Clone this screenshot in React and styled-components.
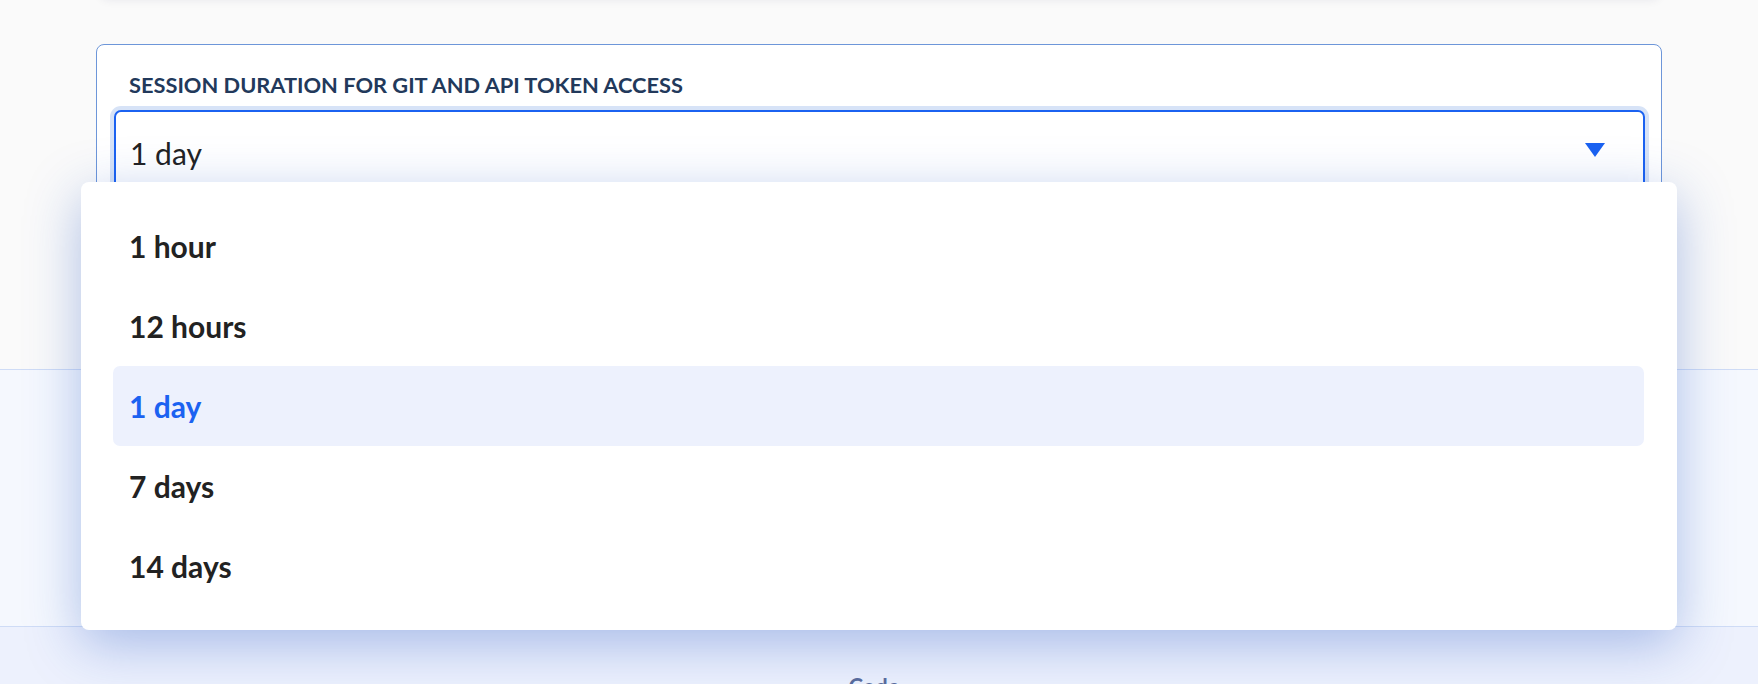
import React from "react";
import styled, { createGlobalStyle } from "styled-components";

const Global = createGlobalStyle`
  html, body { margin: 0; padding: 0; }
  body {
    background: #fafafa;
    font-family: Lato, "Noto Sans", "Liberation Sans", sans-serif;
    overflow: hidden;
  }
  * { box-sizing: border-box; }
`;

const Page = styled.div`
  display: flex;
  flex-direction: column;
  width: 1758px;
  height: 684px;
  overflow: hidden;
`;

const PrevCard = styled.div`
  flex: none;
  height: 40px;
  margin: -42px 98px 0 100px;
  background: #ffffff;
  border-radius: 8px;
  box-shadow: 0 2px 10px rgba(30, 30, 80, 0.08);
`;

const SettingsCard = styled.section`
  flex: none;
  margin: 46px 96px 0 96px;
  width: 1566px;
  background: #ffffff;
  border: 1px solid #6d96d9;
  border-radius: 8px;
  padding: 27px 16px 133px 17px;
  display: flex;
  flex-direction: column;
`;

const Label = styled.label`
  display: block;
  padding-left: 15px;
  font-size: 21.8px;
  line-height: 26px;
  font-weight: 700;
  color: #22395b;
  text-transform: uppercase;
`;

const SelectWrap = styled.div`
  position: relative;
  margin-top: 12px;
`;

const SelectBox = styled.div`
  height: 85px;
  display: flex;
  align-items: center;
  justify-content: space-between;
  padding: 0 38px 0 14px;
  border: 2px solid #1b62f1;
  border-radius: 7px;
  box-shadow: 0 0 0 4px #d7e3f7;
  background: #ffffff;
  font-size: 30px;
  line-height: 36px;
  color: #222222;
`;

const Arrow = styled.svg`
  width: 20px;
  height: 14px;
  margin-bottom: 5px;
  flex: none;
`;

const Menu = styled.ul`
  position: absolute;
  left: -33px;
  right: -32px;
  top: 72px;
  margin: 0;
  padding: 24px 33px 24px 32px;
  list-style: none;
  background: #ffffff;
  border-radius: 8px;
  box-shadow: 0 14px 54px rgba(30, 80, 190, 0.34);
  z-index: 5;
`;

const Item = styled.li`
  height: 80px;
  display: flex;
  align-items: center;
  padding-left: 16px;
  border-radius: 7px;
  font-size: 30px;
  font-weight: 700;
  color: ${(p) => (p.$selected ? "#1b62f1" : "#222222")};
  background: ${(p) => (p.$selected ? "#edf1fd" : "transparent")};
`;

const Band = styled.div`
  flex: none;
  margin-top: 40px;
  height: 258px;
  background: #f5f8fe;
  border-top: 1px solid #cfdcf6;
  border-bottom: 1px solid #cfdcf6;
`;

const Footer = styled.div`
  flex: 1;
  background: #edf1fd;
  display: flex;
  justify-content: center;
  padding-top: 46px;
`;

const FooterText = styled.span`
  font-size: 22px;
  line-height: 28px;
  font-weight: 700;
  color: #5a6c9c;
  margin-right: 10px;
`;

const options = ["1 hour", "12 hours", "1 day", "7 days", "14 days"];

export default function App() {
  const selected = "1 day";
  return (
    <>
      <Global />
      <Page>
        <PrevCard />
        <SettingsCard>
          <Label>Session duration for Git and API token access</Label>
          <SelectWrap>
            <SelectBox>
              <span>{selected}</span>
              <Arrow viewBox="0 0 20 14" aria-hidden="true">
                <path d="M0 0 H20 L10 14 Z" fill="#1b62f1" />
              </Arrow>
            </SelectBox>
            <Menu role="listbox">
              {options.map((o) => (
                <Item key={o} $selected={o === selected} role="option">
                  {o}
                </Item>
              ))}
            </Menu>
          </SelectWrap>
        </SettingsCard>
        <Band />
        <Footer>
          <FooterText>Code</FooterText>
        </Footer>
      </Page>
    </>
  );
}
